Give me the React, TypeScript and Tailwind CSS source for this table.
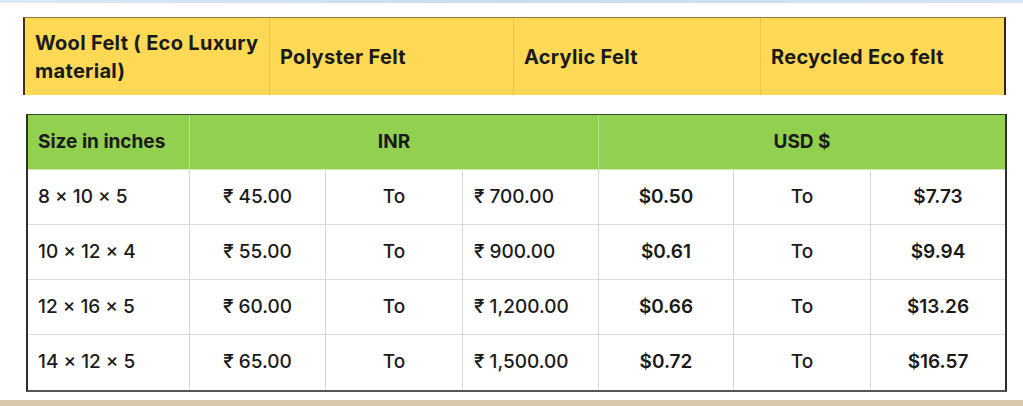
import React from "react";

const rows = [
  ["8 × 10 × 5", "₹ 45.00", "To", "₹ 700.00", "$0.50", "To", "$7.73"],
  ["10 × 12 × 4", "₹ 55.00", "To", "₹ 900.00", "$0.61", "To", "$9.94"],
  ["12 × 16 × 5", "₹ 60.00", "To", "₹ 1,200.00", "$0.66", "To", "$13.26"],
  ["14 × 12 × 5", "₹ 65.00", "To", "₹ 1,500.00", "$0.72", "To", "$16.57"],
];

export default function App() {
  return (
    <div
      className="w-[1023px] h-[406px] bg-white flex flex-col overflow-hidden text-[#1a1a1a]"
      style={{ fontFamily: 'Inter, "Noto Sans", sans-serif' }}
    >
      <div className="h-[3px] bg-gradient-to-r from-[#dce9f5] via-[#c9dcef] to-[#d6e5f3]" />
      <div className="pt-[14px] pl-[23px]">
        <div className="w-[983px] h-[78px] bg-[#fdd955] border-l-2 border-r-2 border-t border-l-[#3a3420] border-r-[#2a2510] border-t-[#8f7d3c] grid grid-cols-[245px_244px_247px_1fr] text-[20px] font-bold leading-[28px] tracking-[0.3px]">
          <div className="flex items-center pl-[10px] pr-1 border-r border-[#e9c54a]">
            <span>Wool Felt ( Eco Luxury material)</span>
          </div>
          <div className="flex items-center pl-[10px] border-r border-[#e9c54a]">Polyster Felt</div>
          <div className="flex items-center pl-[10px] border-r border-[#e9c54a]">Acrylic Felt</div>
          <div className="flex items-center pl-[10px]">Recycled Eco felt</div>
        </div>
      </div>
      <div className="pt-[19px] pl-[26px]">
        <div className="w-[981px] border-l-2 border-r-2 border-t border-b-2 border-l-[#2e2e2e] border-r-[#2e2e2e] border-t-[#3c4a30] border-b-[#555555]">
          <div className="grid grid-cols-[162px_409px_1fr] h-[55px] bg-[#92d050] text-[19px] font-bold border-b border-[#cfe8b8]">
            <div className="flex items-center pl-[10px] border-r border-[#b8e09a]">Size in inches</div>
            <div className="flex items-center justify-center border-r border-[#b8e09a]">INR</div>
            <div className="flex items-center justify-center">USD $</div>
          </div>
          {rows.map((r, i) => (
            <div
              key={i}
              className={`grid grid-cols-[162px_136px_137px_136px_135px_137px_1fr] h-[55px] text-[19px] font-medium ${
                i < rows.length - 1 ? "border-b border-[#dcdcdc]" : ""
              }`}
            >
              <div className="flex items-center pl-[10px] border-r border-[#d9d9d9]">{r[0]}</div>
              <div className="flex items-center justify-center border-r border-[#d9d9d9]">{r[1]}</div>
              <div className="flex items-center justify-center border-r border-[#d9d9d9]">{r[2]}</div>
              <div className="flex items-center pl-[11px] border-r border-[#d9d9d9]">{r[3]}</div>
              <div className="flex items-center justify-center border-r border-[#d9d9d9] font-semibold">{r[4]}</div>
              <div className="flex items-center justify-center border-r border-[#d9d9d9]">{r[5]}</div>
              <div className="flex items-center justify-center font-semibold">{r[6]}</div>
            </div>
          ))}
        </div>
      </div>
      <div className="flex-1" />
      <div className="h-[6px] bg-[#d8c7ad]" />
    </div>
  );
}
